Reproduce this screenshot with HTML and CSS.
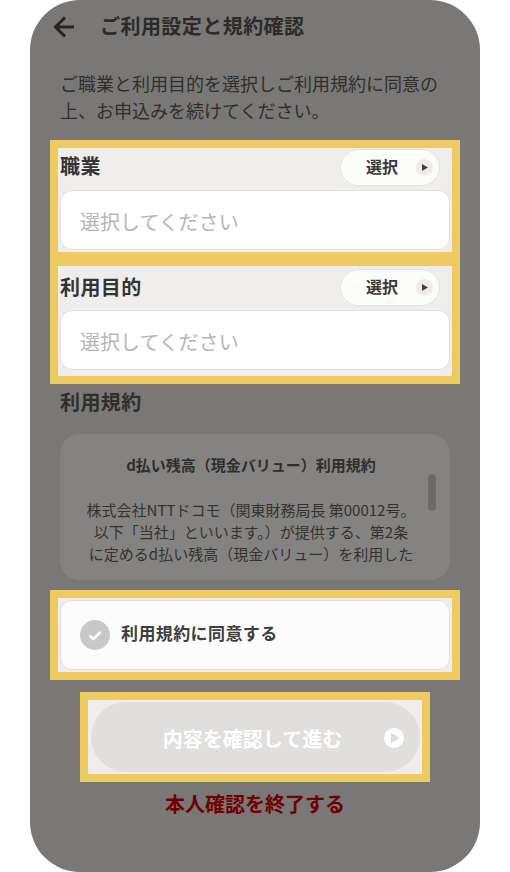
FILE: index.html
```html
<!DOCTYPE html>
<html lang="ja">
<head>
<meta charset="utf-8">
<title>ご利用設定と規約確認</title>
<link rel="stylesheet" href="styles.css">
</head>
<body>
<main class="phone">
  <header class="header">
    <svg class="back" width="22" height="22" viewBox="0 0 22 22" aria-hidden="true"><path d="M21 11H3M12 1.500 2.500 11l9.500 9.500" fill="none" stroke="#262520" stroke-width="3"/></svg>
    <h1 class="title">ご利用設定と規約確認</h1>
  </header>
  <p class="intro">ご職業と利用目的を選択しご利用規約に同意の<br>上、お申込みを続けてください。</p>

  <section class="spot spot-job">
    <div class="field-head">
      <h2 class="label">職業</h2>
      <button class="pill" type="button"><span class="pill-text">選択</span>
        <svg class="pill-icon" width="17" height="17" viewBox="0 0 17 17" aria-hidden="true"><circle cx="8.500" cy="8.500" r="8.500" fill="#efecea"/><path d="M6 5v7l6-3.500z" fill="#4a4038"/></svg>
      </button>
    </div>
    <div class="input">選択してください</div>
  </section>

  <section class="spot spot-purpose">
    <div class="field-head">
      <h2 class="label label-purpose">利用目的</h2>
      <button class="pill" type="button"><span class="pill-text">選択</span>
        <svg class="pill-icon" width="17" height="17" viewBox="0 0 17 17" aria-hidden="true"><circle cx="8.500" cy="8.500" r="8.500" fill="#efecea"/><path d="M6 5v7l6-3.500z" fill="#4a4038"/></svg>
      </button>
    </div>
    <div class="input">選択してください</div>
  </section>

  <h2 class="label terms-label">利用規約</h2>
  <section class="terms">
    <h3 class="terms-title">d払い残高（現金バリュー）利用規約</h3>
    <p class="terms-body">株式会社NTTドコモ（関東財務局長 第00012号。<br>以下「当社」といいます。）が提供する、第2条<br>に定めるd払い残高（現金バリュー）を利用した</p>
    <div class="scrollbar"></div>
  </section>

  <section class="spot spot-agree">
    <label class="agree">
      <svg class="check" width="30" height="30" viewBox="0 0 30 30" aria-hidden="true"><circle cx="15" cy="15" r="15" fill="#c9c8c6"/><path d="M9.500 15.500l4 3.500 7-7" fill="none" stroke="#fff" stroke-width="2.600"/></svg>
      <span class="agree-text">利用規約に同意する</span>
    </label>
  </section>

  <section class="spot spot-cta">
    <button class="cta" type="button"><span>内容を確認して進む</span>
      <svg class="cta-icon" width="20" height="20" viewBox="0 0 20 20" aria-hidden="true"><circle cx="10" cy="10" r="10" fill="#fff"/><path d="M7 4.500v11l8.500-5.500z" fill="#dcdbd9"/></svg>
    </button>
  </section>

  <a class="quit" href="#">本人確認を終了する</a>
</main>
</body>
</html>
```

FILE: styles.css
```css
* {
  box-sizing: border-box;
}

html,
body {
  margin: 0;
  background: #fff;
}

body {
  font-family: "Noto Sans CJK JP", "Noto Sans", sans-serif;
  color: #2c2b29;
}

h1,
h2,
h3,
p {
  margin: 0;
}

.phone {
  width: 450px;
  height: 872px;
  margin-left: 30px;
  padding: 0 20px;
  background: #7a7876;
  border-radius: 50px;
  overflow: hidden;
}

.header {
  display: flex;
  align-items: center;
  height: 54px;
  padding-left: 3px;
}

.back {
  flex: none;
}

.title {
  margin: 0 0 3px 25px;
  font-size: 20px;
  line-height: 48px;
  letter-spacing: 0.45px;
  font-weight: 700;
}

.intro {
  margin-top: 16px;
  padding-left: 10px;
  font-size: 18px;
  line-height: 27px;
  color: #2f2e2c;
}

.spot {
  border: 8px solid #eecb60;
  background: #efeeec;
}

.spot-job {
  margin-top: 16px;
  height: 120px;
  padding: 1px 2px 2px;
}

.spot-purpose {
  margin-top: -2px;
  height: 126px;
  padding: 3px 2px 6px;
}

.field-head {
  display: flex;
  align-items: center;
  justify-content: space-between;
  padding-right: 10px;
}

.label {
  padding-bottom: 4px;
  font-size: 20px;
  line-height: 28px;
  letter-spacing: 0.4px;
  font-weight: 700;
  color: #353432;
}

.label-purpose {
  padding-bottom: 2px;
}

.pill {
  display: flex;
  align-items: center;
  gap: 18px;
  width: 100px;
  height: 37px;
  padding: 0 0 0 25px;
  border: 1px solid #e6e4e2;
  border-radius: 19px;
  background: #fcfcfb;
  font: 700 16px/24px "Noto Sans CJK JP", sans-serif;
  color: #3a3937;
}

.pill-text {
  margin-bottom: 4px;
}

.pill-icon {
  flex: none;
}

.input {
  height: 60px;
  margin-top: 4px;
  padding: 2px 0 0 19px;
  border: 1px solid #e2e0df;
  border-radius: 12px;
  background: #fff;
  font-size: 20px;
  line-height: 58px;
  color: #b7b5b3;
}

.terms-label {
  margin: 4px 0 0 10px;
  padding-bottom: 0;
  line-height: 28px;
  color: #2f2e2c;
}

.terms {
  position: relative;
  height: 146px;
  margin: 18px 10px 0;
  padding: 20px 8px 0 0;
  border-radius: 20px;
  background: #858381;
  overflow: hidden;
  text-align: center;
}

.terms-title {
  font-size: 15px;
  line-height: 22px;
  font-weight: 700;
  color: #2f2e2c;
}

.terms-body {
  margin-top: 23px;
  font-size: 15px;
  line-height: 22px;
  color: #33322f;
}

.scrollbar {
  position: absolute;
  top: 40px;
  right: 14px;
  width: 8px;
  height: 37px;
  border-radius: 4px;
  background: #6c6a68;
}

.spot-agree {
  margin-top: 10px;
  height: 90px;
  padding: 2px;
}

.agree {
  display: flex;
  align-items: center;
  gap: 11px;
  height: 70px;
  padding-left: 19px;
  border: 1px solid #e2e0df;
  border-radius: 12px;
  background: #fcfcfc;
  font-size: 17px;
  line-height: 26px;
  letter-spacing: 0.4px;
  font-weight: 700;
  color: #3f3e3c;
}

.agree-text {
  margin-bottom: 4px;
}

.check {
  flex: none;
}

.spot-cta {
  width: 350px;
  height: 90px;
  margin: 12px 0 0 30px;
  padding: 2px 2px 2px 3px;
}

.cta {
  position: relative;
  display: block;
  width: 329px;
  height: 70px;
  padding: 3px 6px 0 0;
  border: 0;
  border-radius: 35px;
  background: #e0dfdd;
  font: 700 20px/28px "Noto Sans CJK JP", sans-serif;
  color: #fff;
  text-align: center;
}

.cta-icon {
  position: absolute;
  top: 26px;
  right: 16px;
}

.quit {
  display: block;
  height: 44px;
  font-size: 20px;
  line-height: 44px;
  font-weight: 700;
  color: #6e0000;
  text-align: center;
  text-decoration: none;
}
```
